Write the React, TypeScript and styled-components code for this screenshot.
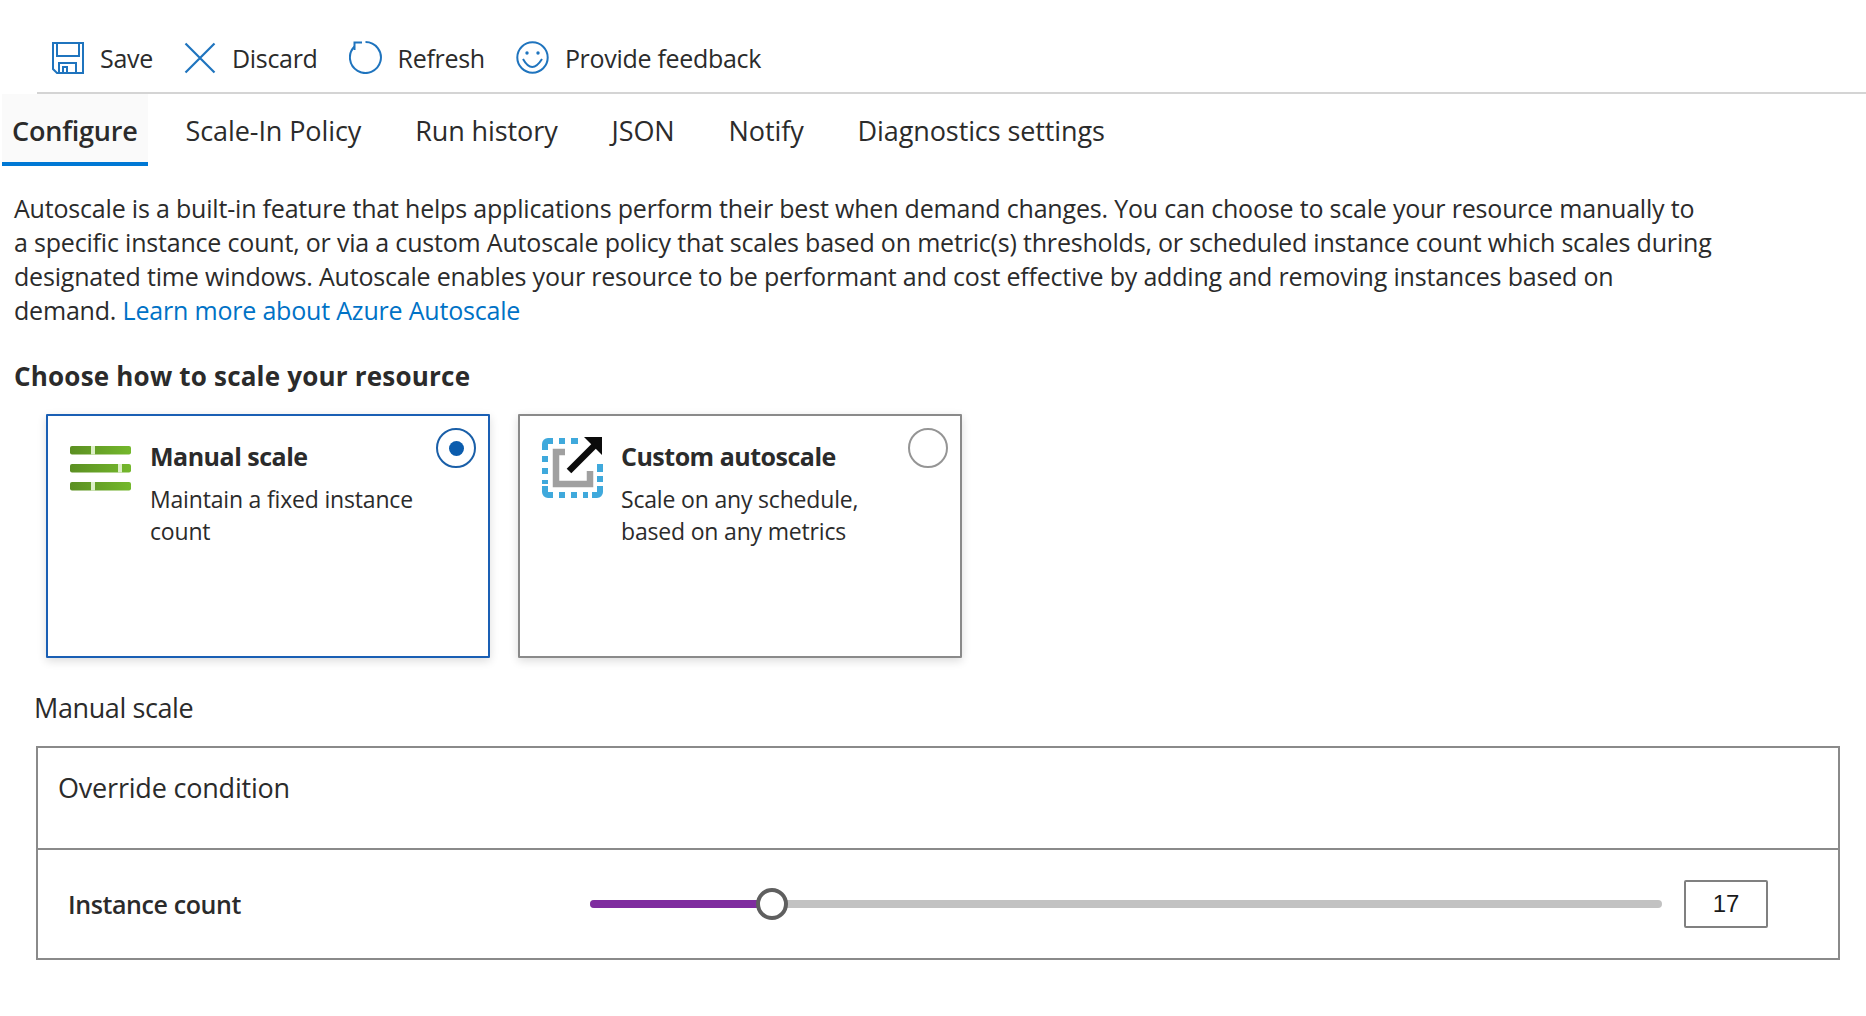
import * as React from 'react'

import styled, { createGlobalStyle } from 'styled-components'

const BLUE = '#1f74be'
const TEXT = '#2b2b2b'
const LINE = '#8a8a8a'

const GlobalStyle = createGlobalStyle`
  html, body {
    margin: 0;
    background: #fff;
  }

  body {
    font-family: "Open Sans", "Noto Sans", Arial, sans-serif;
    color: ${TEXT};
  }
`

const SaveIcon: React.FC = () => (
  <svg width="32" height="32" viewBox="0 0 32 32" fill="none" stroke={BLUE} strokeWidth="2">
    <path d="M1 1H31V31H5L1 27Z" />
    <path d="M5 1V14H27V1" />
    <path d="M7 31V21H24V31" />
    <path d="M11 31V25H15V31" />
  </svg>
)

const DiscardIcon: React.FC = () => (
  <svg width="32" height="32" viewBox="0 0 32 32" fill="none" stroke={BLUE} strokeWidth="2.2">
    <path d="M1.5 1.5L30.5 30.5M30.5 1.5L1.5 30.5" />
  </svg>
)

const RefreshIcon: React.FC = () => (
  <svg width="33" height="33" viewBox="0 0 33 33" fill="none" stroke={BLUE} strokeWidth="2">
    <path d="M16.5 1A15.5 15.5 0 1 1 5.5 5.5" />
    <path d="M13 1.5H5.5V9" />
  </svg>
)

const SmileIcon: React.FC = () => (
  <svg width="33" height="33" viewBox="0 0 33 33" fill="none" stroke={BLUE} strokeWidth="2">
    <circle cx="16.5" cy="16.5" r="15.2" />
    <circle cx="11" cy="12" r="1.7" fill={BLUE} stroke="none" />
    <circle cx="22" cy="12" r="1.7" fill={BLUE} stroke="none" />
    <path d="M7 18Q16 34 26 18" />
  </svg>
)

const ManualIcon: React.FC = () => (
  <svg width="62" height="62" viewBox="0 0 62 62">
    <defs>
      <linearGradient id="bar" x1="0" y1="0" x2="1" y2="0">
        <stop offset="0" stopColor="#5b8f22" />
        <stop offset="1" stopColor="#74b82c" />
      </linearGradient>
    </defs>
    <rect x="0" y="9" width="61" height="8.5" rx="2" fill="url(#bar)" />
    <rect x="21" y="9" width="4" height="8.5" fill="#dcefc6" />
    <rect x="0" y="27" width="61" height="8.5" rx="2" fill="url(#bar)" />
    <rect x="48" y="27" width="4" height="8.5" fill="#dcefc6" />
    <rect x="0" y="45" width="61" height="8.5" rx="2" fill="url(#bar)" />
    <rect x="21" y="45" width="4" height="8.5" fill="#dcefc6" />
  </svg>
)

const CustomIcon: React.FC = () => (
  <svg width="62" height="62" viewBox="0 0 62 62" fill="none" style={{ overflow: 'visible' }}>
    <g stroke="#3fa9dc" strokeWidth="6">
      <path d="M5 13V7a3 3 0 0 1 3-3H13" />
      <path d="M19 4H25M31 4H38" />
      <path d="M5 19V25M5 31V37M5 43V47" />
      <path d="M5 49V55a3 3 0 0 0 3 3H13" />
      <path d="M19 58H25M31 58H37M43 58H48" />
      <path d="M52 58H57a3 3 0 0 0 3-3V49" />
      <path d="M60 27V35M60 39V45" />
    </g>
    <path d="M25 15H16V47H50V34" stroke="#a0a0a0" strokeWidth="6.5" />
    <path d="M29 34L54 9" stroke="#0b0b0b" strokeWidth="6.5" />
    <path d="M44 0H62V18Z" fill="#0b0b0b" />
  </svg>
)

const TABS = ['Configure', 'Scale-In Policy', 'Run history', 'JSON', 'Notify', 'Diagnostics settings']

const App: React.FC = () => (
  <Page>
    <GlobalStyle />
    <Toolbar>
      <ToolButton>
        <SaveIcon />
        <span>Save</span>
      </ToolButton>
      <ToolButton>
        <DiscardIcon />
        <span>Discard</span>
      </ToolButton>
      <ToolButton>
        <RefreshIcon />
        <span>Refresh</span>
      </ToolButton>
      <ToolButton>
        <SmileIcon />
        <span>Provide feedback</span>
      </ToolButton>
    </Toolbar>

    <Tabs>
      {TABS.map((tab, i) => (
        <Tab key={tab} $active={i === 0}>
          {tab}
        </Tab>
      ))}
    </Tabs>

    <Intro>
      Autoscale is a built-in feature that helps applications perform their best when demand changes. You can choose to
      scale your resource manually to
      <br />a specific instance count, or via a custom Autoscale policy that scales based on metric(s) thresholds, or
      scheduled instance count which scales during
      <br />
      designated time windows. Autoscale enables your resource to be performant and cost effective by adding and
      removing instances based on
      <br />
      demand. <IntroLink href="#">Learn more about Azure Autoscale</IntroLink>
    </Intro>

    <Heading>Choose how to scale your resource</Heading>

    <Cards>
      <Card $selected>
        <ManualIcon />
        <CardBody>
          <CardTitle>Manual scale</CardTitle>
          <CardText>
            Maintain a fixed instance
            <br />
            count
          </CardText>
        </CardBody>
        <Radio $selected />
      </Card>
      <Card>
        <CustomIcon />
        <CardBody>
          <CardTitle>Custom autoscale</CardTitle>
          <CardText>
            Scale on any schedule,
            <br />
            based on any metrics
          </CardText>
        </CardBody>
        <Radio />
      </Card>
    </Cards>

    <SectionLabel>Manual scale</SectionLabel>

    <ScaleBox>
      <OverrideRow>Override condition</OverrideRow>
      <CountRow>
        <CountLabel>Instance count</CountLabel>
        <Slider>
          <SliderFill />
          <SliderThumb />
        </Slider>
        <CountInput>17</CountInput>
      </CountRow>
    </ScaleBox>
  </Page>
)

export default App

const Page = styled.div`
  width: 1866px;
  height: 1016px;
  overflow: hidden;
  font-size: 25px;
  line-height: 34px;
`

const Toolbar = styled.div`
  display: flex;
  align-items: flex-start;
  gap: 31px;
  height: 51px;
  margin-left: 37px;
  padding: 41px 0 0 15px;
  border-bottom: 2px solid #d4d4d4;
`

const ToolButton = styled.div`
  display: flex;
  align-items: center;
  gap: 16px;
  height: 33px;
  letter-spacing: -0.3px;
  font-size: 25px;
`

const Tabs = styled.div`
  display: flex;
  height: 72px;
  margin-left: 2px;
`

const Tab = styled.div<{ $active?: boolean }>`
  display: flex;
  align-items: center;
  height: 72px;
  box-sizing: border-box;
  padding: 6px ${p => (p.$active ? '10px' : '27px')} 0;
  font-size: 27px;
  letter-spacing: ${p => (p.$active ? '-0.2px' : '-0.1px')};
  font-weight: ${p => (p.$active ? 600 : 400)};
  background: ${p => (p.$active ? '#fafafa' : 'transparent')};
  border-bottom: 4px solid ${p => (p.$active ? '#0078d4' : 'transparent')};

  &:nth-child(2) {
    margin-left: 11px;
  }
`

const Intro = styled.p`
  margin: 25px 0 0 14px;
  font-size: 25px;
  letter-spacing: -0.19px;
  white-space: nowrap;
`

const IntroLink = styled.a`
  color: #0072c6;
  text-decoration: none;
`

const Heading = styled.h2`
  margin: 32px 0 0 14px;
  font-size: 26px;
  line-height: 34px;
  font-weight: 700;
  letter-spacing: 0.2px;
`

const Cards = styled.div`
  display: flex;
  gap: 28px;
  margin: 21px 0 0 46px;
`

const Card = styled.div<{ $selected?: boolean }>`
  display: flex;
  align-items: flex-start;
  gap: ${p => (p.$selected ? '18px' : '19px')};
  width: 444px;
  height: 244px;
  box-sizing: border-box;
  padding: 12px 12px 0 ${p => (p.$selected ? '22px' : '20px')};
  border: 2px solid ${p => (p.$selected ? '#1a5fb4' : LINE)};
  border-radius: 1px;
  box-shadow: 0 3px 10px rgba(0, 0, 0, 0.14);

  > svg {
    flex: none;
    margin-top: 9px;
  }
`

const CardBody = styled.div`
  flex: 1;
  padding-top: 12px;
`

const CardTitle = styled.div`
  font-size: 25px;
  line-height: 32px;
  font-weight: 700;
  letter-spacing: -0.5px;
`

const CardText = styled.div`
  margin-top: 11px;
  font-size: 23px;
  line-height: 32px;
  letter-spacing: -0.18px;
`

const Radio = styled.div<{ $selected?: boolean }>`
  display: flex;
  align-items: center;
  justify-content: center;
  flex: none;
  width: 40px;
  height: 40px;
  box-sizing: border-box;
  border: 2px solid ${p => (p.$selected ? '#1a5fa8' : '#959595')};
  border-radius: 50%;

  &::after {
    content: '';
    display: ${p => (p.$selected ? 'block' : 'none')};
    width: 15px;
    height: 15px;
    border-radius: 50%;
    background: #0b5cad;
  }
`

const SectionLabel = styled.div`
  margin: 33px 0 0 34px;
  font-size: 27px;
  letter-spacing: -0.4px;
`

const ScaleBox = styled.div`
  width: 1804px;
  margin: 21px 0 0 36px;
  box-sizing: border-box;
  border: 2px solid ${LINE};
`

const OverrideRow = styled.div`
  height: 102px;
  box-sizing: border-box;
  padding: 23px 0 0 20px;
  font-size: 27px;
  letter-spacing: -0.2px;
  border-bottom: 2px solid ${LINE};
`

const CountRow = styled.div`
  display: flex;
  align-items: center;
  height: 108px;
  box-sizing: border-box;
  padding: 0 0 0 30px;
`

const CountLabel = styled.div`
  width: 522px;
  flex: none;
  font-size: 25px;
  font-weight: 600;
  letter-spacing: -0.4px;
`

const Slider = styled.div`
  position: relative;
  width: 1072px;
  height: 8px;
  border-radius: 4px;
  background: #c2c2c2;
  margin-top: -1px;
`

const SliderFill = styled.div`
  width: 182px;
  height: 100%;
  border-radius: 4px 0 0 4px;
  background: #7f2d9f;
`

const SliderThumb = styled.div`
  position: absolute;
  left: 166px;
  top: -12px;
  width: 32px;
  height: 32px;
  box-sizing: border-box;
  border: 4px solid #5f5f5f;
  border-radius: 50%;
  background: #fff;
`

const CountInput = styled.div`
  width: 84px;
  height: 48px;
  margin-left: 22px;
  margin-top: -1px;
  box-sizing: border-box;
  border: 2px solid #808080;
  border-radius: 2px;
  font-family: "Liberation Sans", Arial, sans-serif;
  font-size: 24px;
  line-height: 44px;
  text-align: center;
  color: #1a1a1a;
`
